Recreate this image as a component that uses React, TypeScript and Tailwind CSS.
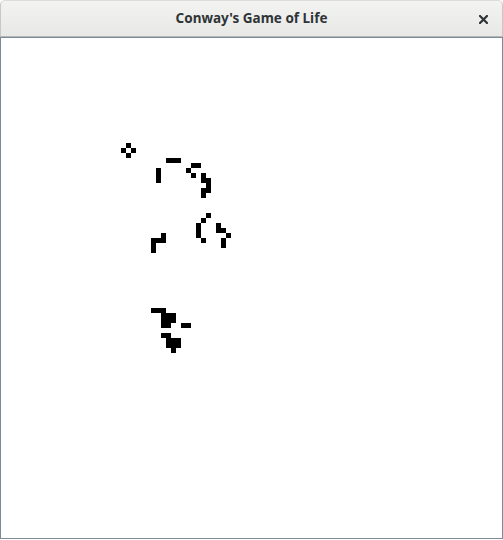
import React from "react";

const cells: [number, number][] = [
  [25, 21], [24, 22], [26, 22], [25, 23],
  [33, 24], [34, 24], [35, 24],
  [31, 26], [31, 27], [31, 28],
  [37, 26],
  [38, 25], [39, 25],
  [38, 27], [40, 27],
  [40, 28], [41, 28],
  [41, 29],
  [40, 30], [41, 30],
  [40, 31],
  [32, 39], [30, 40], [31, 40], [32, 40], [30, 41], [30, 42],
  [41, 35], [40, 36], [39, 37], [43, 37], [39, 38], [43, 38], [44, 38],
  [39, 39], [45, 39], [40, 40], [44, 40], [44, 41],
  [30, 54], [31, 54], [32, 54],
  [32, 55], [33, 55], [34, 55],
  [32, 56], [33, 56], [34, 56],
  [32, 57], [33, 57], [36, 57], [37, 57],
  [32, 59], [33, 59],
  [33, 60], [34, 60], [35, 60],
  [33, 61], [34, 61], [35, 61],
  [34, 62],
];

export default function App() {
  return (
    <div className="w-[503px] h-[540px] flex flex-col bg-white">
      <div
        className="h-[37px] shrink-0 relative flex items-center justify-center rounded-t-[5px] border border-b-[#b6b6b3] border-x-[#c8c8c5] border-t-[#dcdcdc] bg-gradient-to-b from-[#f3f3f2] to-[#e8e8e7]"
      >
        <span
          className="text-[13.5px] font-bold text-[#2e3436] leading-none"
          style={{ fontFamily: '"Noto Sans", "Open Sans", sans-serif' }}
        >
          Conway's Game of Life
        </span>
        <svg
          className="absolute right-[14px] top-[14px]"
          width="9"
          height="9"
          viewBox="0 0 9 9"
        >
          <path d="M1 1 L8 8 M8 1 L1 8" stroke="#2e3436" strokeWidth="2.2" strokeLinecap="square" />
        </svg>
      </div>
      <div className="h-[502px] shrink-0 border border-[#7d8b98] bg-white">
        <svg width="501" height="500" viewBox="0 0 501 500" className="block">
          {cells.map(([c, r], i) => (
            <rect key={i} x={c * 5} y={r * 5} width={5} height={5} fill="#000" shapeRendering="crispEdges" />
          ))}
        </svg>
      </div>
    </div>
  );
}
